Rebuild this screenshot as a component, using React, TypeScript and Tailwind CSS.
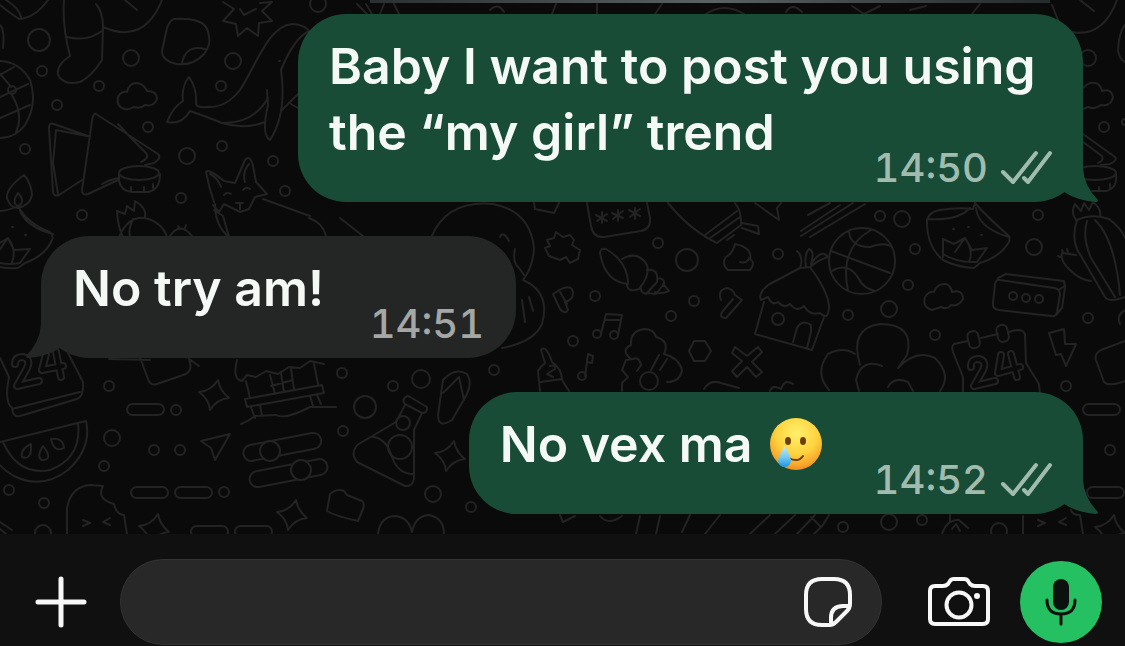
import { type ReactNode } from "react";

type BubbleProps = {
  mine?: boolean;
  time: string;
  children: ReactNode;
};

const dots = [
  [39, 40, 11], [131, 58, 8], [233, 61, 8], [42, 71, 5], [99, 86, 5], [57, 105, 5], [221, 86, 5], [148, 127, 5],
  [25, 149, 5], [187, 156, 8], [222, 146, 5], [273, 161, 5], [285, 191, 5], [181, 198, 5], [82, 215, 5],
  [109, 386, 5], [176, 410, 5], [112, 438, 8], [154, 450, 5], [180, 450, 5], [104, 466, 5], [9, 490, 5],
  [44, 503, 5], [224, 492, 5], [43, 533, 8], [342, 373, 5], [421, 379, 9], [393, 386, 5], [365, 407, 11],
  [343, 431, 5], [433, 494, 8], [471, 507, 5], [494, 370, 5], [658, 243, 5], [687, 260, 11], [778, 254, 5],
  [595, 296, 5], [694, 301, 5], [671, 316, 5], [573, 341, 5], [880, 216, 5], [902, 219, 8], [915, 249, 5],
  [908, 285, 5], [889, 309, 8], [848, 315, 5], [935, 335, 5], [1038, 215, 5], [1034, 247, 8], [1088, 318, 5],
  [1066, 386, 5], [1110, 450, 5], [843, 527, 5], [889, 522, 8], [922, 520, 5], [999, 531, 8], [318, 4, 8],
  [1088, 58, 8], [1104, 127, 5], [1125, 122, 3],
];

const pills = [
  [127, 404], [131, 487], [175, 487], [191, 526], [235, 526], [1083, 404], [1087, 487],
];

const sparkles = [
  [214, 395], [450, 456], [292, 515], [154, 529], [1110, 530],
];

function Wallpaper() {
  return (
    <svg
      aria-hidden="true"
      viewBox="0 0 1125 534"
      preserveAspectRatio="xMinYMin slice"
      className="absolute inset-0 h-full w-full"
      fill="none"
      stroke="#242323"
      strokeWidth="2"
      strokeLinecap="round"
      strokeLinejoin="round"
    >
      {dots.map(([x, y, r]) => (
        <circle key={`${x}-${y}`} cx={x} cy={y} r={r} />
      ))}
      {pills.map(([x, y]) => (
        <rect key={`${x}-${y}`} x={x} y={y} width="37" height="11" rx="5.5" />
      ))}
      {sparkles.map(([x, y]) => (
        <path
          key={`${x}-${y}`}
          transform={`translate(${x} ${y})`}
          d="M4-15Q6-4 15 3Q3 4-4 15Q-5 4-15-3Q-3-4 4-15Z"
        />
      ))}

      {/* globe, stocking, sticker, badge */}
      <path d="M0 5Q14 16 19 19Q35 18 48 0M6 0Q19 8 21 17M0 25Q5 30 3 48M0 61Q20 62 30 80Q38 104 25 125Q15 138 0 138M0 75L14 67M0 97L28 84M0 118L30 105M12 95Q24 116 16 132M0 74Q8 83 11 87" />
      <circle cx="12" cy="90" r="4" />
      <path d="M64 0Q62 26 70 56Q56 65 58 75Q64 86 80 82Q92 76 102 60L103 27Q103 12 96 4M67 37Q87 42 102 31M103 27Q144 45 162 0M125 0L137 10" />
      <path d="M174 19Q188 18 197 21Q208 24 209 37Q211 44 204 54Q193 66 177 64Q162 61 162 51L167 28Q170 20 174 19ZM182 63Q186 44 205 49" />
      <path d="M223 2L234 9L223 21L236 24L238 36L247 28L258 36L259 23L272 21L262 11L272 2L260 3M240 9L244 15L256 9" />
      <path d="M125 109Q116 107 118 97Q121 91 127 92Q129 83 137 83Q144 84 147 91Q157 91 157 99Q154 107 145 105Q141 109 134 107Q129 110 125 109Z" />

      {/* whale */}
      <path d="M189 77Q197 88 196 103Q196 108 207 107Q226 108 240 90C256 66 268 26 292 24Q306 24 312 35M189 77Q181 87 183 101Q173 107 167 122Q182 125 190 111Q205 116 222 123Q244 130 265 122M196 105M222 123Q253 124 268 98M309 31Q294 38 281 70Q287 114 270 140Q261 135 268 105L267 90M282 110L312 80M291 104L305 112" />
      <path d="M279 61H280" />

      {/* samosas and bowl */}
      <path d="M88 136L54 124Q49 122 49 128L53 192Q54 197 59 195L82 180M87 136L56 130L53 163L58 194M96 114Q93 113 92 121L82 190Q82 196 88 194L118 180M96 114L158 154Q162 158 154 163L145 165M118 124Q128 135 146 153Q150 158 141 162M102 184Q111 179 119 178" />
      <ellipse cx="139" cy="173" rx="20" ry="7" />
      <path d="M119 174V181Q121 191 132 192H148Q160 190 160 174M131 187V191M144 187V191M153 184V188" />

      {/* fox */}
      <path d="M214 202Q209 188 206 172Q208 168 224 181L235 183L245 160Q250 154 253 166L256 182L267 194L255 197L249 209L240 212L224 204L219 212L213 205M214 210L223 216L229 237M263 199L310 216M210 174Q218 178 221 187M249 164Q242 172 245 182M224 195Q227 191 231 194M243 190Q246 186 250 189M236 203H243M240 204V209" />

      {/* oil lamps */}
      <path d="M24 175Q6 188 7 198Q10 208 18 208Q31 205 32 194Q31 183 24 175ZM18 193Q11 203 18 206Q26 202 18 193M0 211Q11 210 18 206Q28 224 50 232Q54 236 52 240Q45 256 25 263L18 268Q8 269 0 267M20 211Q28 228 53 234M0 243L8 238L14 250L30 249L20 263Q10 265 0 263M-2 252L8 238Q17 251 12 262" />
      <path d="M12 227H13M25 235H26" />
      <path d="M927 221Q928 212 940 210Q958 207 973 209L975 203Q986 216 1009 236Q1010 239 1009 242Q1000 257 980 263L974 268Q956 267 943 260Q926 246 927 219ZM928 219Q958 221 970 208M976 208Q978 228 1009 237M943 257V239L954 244L965 238L972 250L987 248L977 262Q957 263 943 254M955 252L965 238Q974 251 969 262" />
      <path d="M953 229H954M968 227H969M981 235H982" />

      {/* cactus */}
      <path d="M123 237Q118 228 117 211L125 214L127 206L134 211L135 201Q147 208 145 217M119 237Q128 216 145 218Q162 222 167 237M133 219Q128 229 130 237M170 236Q180 221 192 236M180 229L178 226M185 228L186 225" />
      <path d="M1077 221Q1070 213 1075 204L1081 211L1084 203L1089 210L1093 202Q1102 209 1100 217M1077 220Q1092 213 1109 219Q1121 228 1125 238M1077 220Q1070 241 1081 256L1105 297Q1109 303 1125 297M1087 221Q1082 237 1091 258L1115 297M1095 220Q1115 239 1120 295M1076 255L1062 253Q1060 261 1070 270Q1080 280 1091 281M1060 257L1058 256M1063 253L1062 250M1068 252L1067 249" />

      {/* calendars */}
      <path d="M968 341L954 344Q951 346 953 352L963 377V392M981 338L998 334M1009 332Q1022 327 1025 334L1026 363L1039 384L1040 394" />
      <rect x="968" y="331" width="11" height="17" rx="5" transform="rotate(-13 974 339)" />
      <rect x="997" y="325" width="11" height="17" rx="5" transform="rotate(-13 1002 333)" />
      <path d="M971 367Q970 359 979 359Q987 361 983 370L974 386L995 381M1001 355L998 373L1020 367M1011 354L1017 377" strokeWidth="8" />
      <path d="M971 367Q970 359 979 359Q987 361 983 370L974 386L995 381M1001 355L998 373L1020 367M1011 354L1017 377" stroke="#0a0a0a" strokeWidth="4" />
      <path d="M0 358L9 377Q4 402 12 408Q13 418 20 416L77 399Q84 397 83 382L68 353M12 409L80 392" />
      <path d="M15 364Q15 357 23 357Q31 359 27 368L17 386L39 381M46 354L42 370L63 366M56 352L61 377" strokeWidth="8" />
      <path d="M15 364Q15 357 23 357Q31 359 27 368L17 386L39 381M46 354L42 370L63 366M56 352L61 377" stroke="#0a0a0a" strokeWidth="4" />

      {/* watermelon and ice cream */}
      <path d="M0 442L86 421Q92 448 68 470Q42 490 14 476Q4 470 0 465M3 442Q18 476 50 470Q82 458 78 423M31 444Q20 449 22 457Q32 461 31 444ZM43 446Q36 457 42 460Q54 460 43 446ZM51 439Q63 437 64 448Q54 453 51 439Z" />
      <path d="M67 534V508Q71 486 91 485L103 486Q96 499 114 504Q116 514 124 515L127 534M83 520L90 523L83 526M110 518L103 522L110 525M0 522L12 530M0 529L6 534" />
      <path d="M1023 516V534M1038 520L1045 523L1038 526M1066 518L1059 522L1066 525M1071 510Q1072 515 1080 515L1083 534" />

      {/* market stall and hut */}
      <path d="M237 360Q232 379 242 381L247 375L256 377L266 371L278 374L289 367L300 368L310 361L324 364M246 381L250 398M270 375L275 394M291 369L294 389M314 364L318 384M271 386L293 380M281 373L284 392M245 399L322 385L324 393L247 407ZM251 407L255 418M260 405L262 416M310 396L313 406M317 395L321 404M241 424Q249 421 255 416L276 415Q285 420 310 407H336M109 359L150 360M138 352L148 379Q150 386 157 384L186 374Q193 370 189 359L199 366" />
      <path d="M800 268L768 285Q758 293 761 300L768 297Q772 306 778 302Q784 309 790 304Q797 313 804 306Q810 316 820 313Q829 322 829 305Q827 290 810 267M797 251Q804 257 800 268L810 267Q820 259 828 257Q822 248 811 264Q815 251 809 249Q804 254 806 267M764 302L755 334L812 350L824 317M793 342L797 328Q802 319 811 325L811 332L807 348" />
      <circle cx="778" cy="319" r="6" />

      {/* paper plane, sliders, flask, slipper */}
      <path d="M201 441L230 434L215 460L211 448ZM378 534Q380 516 396 516Q409 518 412 532Q415 516 429 515Q444 518 444 534M327 511L330 494Q337 488 344 491L347 495L362 501Q365 503 363 509L358 521Q335 516 327 511Z" />
      <rect x="243" y="439" width="79" height="16" rx="8" transform="rotate(-11 282 448)" />
      <rect x="249" y="465" width="79" height="16" rx="8" transform="rotate(-11 289 473)" />
      <circle cx="270" cy="451" r="10" fill="#0a0a0a" />
      <circle cx="301" cy="470" r="10" fill="#0a0a0a" />
      <path d="M407 396Q401 400 405 404L422 413Q428 413 427 407L410 397Q408 396 407 396ZM405 405L396 422L357 445Q350 454 357 462L405 486Q412 487 414 479V430L422 413M373 437Q386 438 392 457Q398 474 413 474" />
      <circle cx="403" cy="423" r="7" />
      <circle cx="400" cy="447" r="12" />
      <path d="M443 380Q455 367 467 374Q474 384 463 401L452 420Q438 429 438 415ZM443 393L459 377L464 400" />

      {/* smiley and mitten peeking out behind the reply */}
      <path d="M431 238Q446 200 493 204Q530 211 534 248Q533 267 523 280M500 237Q503 230 509 241M515 249Q512 262 519 268L524 275M523 280Q551 292 542 324Q534 342 502 348M522 300L525 322M529 297L533 311M215 204Q215 226 229 237M340 218L363 236M309 218Q323 223 326 236" />

      {/* password, gear, shell, boat */}
      <path d="M587 203L591 226Q593 238 604 237L641 231Q651 229 650 218L647 203M602 212V223M596 215L607 221M607 214L597 221M618 210V221M612 213L623 218M623 211L613 219M635 208V219M629 210L640 216M640 209L630 217M534 203L535 209L554 213L559 203" />
      <path d="M556 232L563 237L570 235L574 240L572 245L580 250L578 259L570 263L566 257L560 260L549 256L545 248L550 246L547 240L554 238Z" />
      <path d="M606 249Q628 262 628 284Q605 282 600 253Q600 248 606 249ZM622 259Q638 250 647 265Q650 276 639 289Q628 293 627 285M647 270Q659 268 657 282L646 294Q640 292 641 288M657 278Q665 278 664 284L656 294L647 293M663 284L669 291Q660 295 655 292" />
      <path d="M668 203Q690 230 717 243L741 225Q742 212 735 203M705 235L737 211M710 238L740 217M742 223L758 226L759 234L742 228M755 203L779 220L777 208L781 203M808 215L830 203M801 231L840 205M801 236L853 203M810 237L865 204M727 240L734 235" />
      <path d="M735 244Q733 253 726 257Q721 264 728 270H750Q756 263 750 259Q753 248 735 244ZM740 262Q747 264 749 258" />

      {/* keys, notes, flowers */}
      <path d="M553 294Q572 281 573 293Q573 300 565 302L568 310Q565 315 560 309ZM560 292L567 304M721 300Q717 290 727 288Q733 289 735 295L742 300L726 318Q719 318 722 312L733 299M601 334L606 314L622 315L618 335M606 320H621M585 376L588 354L593 356L592 363L587 362" />
      <circle cx="597" cy="334" r="4" />
      <circle cx="614" cy="335" r="4" />
      <circle cx="582" cy="376" r="4" />
      <path d="M631 359Q620 350 631 345Q630 331 644 329Q654 329 656 337Q670 341 664 354Q679 358 682 370Q680 382 667 382M659 355L651 370M667 359L660 370M637 371L641 365Q639 356 633 359L626 360L622 370L628 377L622 383V391" />
      <circle cx="649" cy="381" r="9" />
      <path d="M689 351L694 341H705L711 351L705 361H694ZM735 347L747 356L758 347L762 352L752 362L762 372L756 377L747 367L737 377L732 371L742 361L732 353Z" />
      <path d="M540 391L538 371Q541 366 545 363L541 350Q546 344 552 362Q562 369 562 380L569 391M541 382L562 379M550 366Q555 364 555 369L547 374L553 377M704 389Q710 379 721 383L739 388M770 391Q772 384 781 389Q785 378 793 384" />

      {/* basketball, cloud, brick, bolt, tree */}
      <circle cx="862" cy="261" r="33" />
      <path d="M831 251L890 273M849 231Q850 247 870 247Q882 242 891 246M871 230Q839 248 848 291M832 271Q848 261 859 279Q863 288 875 291" />
      <path d="M932 310Q922 307 925 297Q929 291 934 292Q937 283 946 284Q951 286 952 292Q963 289 963 299Q958 307 951 305Q947 310 941 307Z" />
      <path d="M1000 280L1054 288Q1060 289 1060 294L1057 312Q1056 317 1051 316L999 310Q992 309 993 303L995 284Q996 279 1000 280ZM998 278L1006 274L1064 281L1065 287L1062 308L1056 315M1060 289L1065 286" />
      <circle cx="1013" cy="296" r="4" />
      <circle cx="1026" cy="298" r="4" />
      <circle cx="1039" cy="299" r="4" />
      <path d="M1049 333L1064 329L1065 344L1076 344L1066 366L1061 354L1056 355ZM1125 341L1101 350Q1094 354 1096 360L1104 382Q1109 387 1125 381M1125 310Q1116 315 1120 324" />
      <path d="M860 365Q849 328 880 324Q915 324 907 355L898 368Q916 349 935 358Q952 375 940 391M855 354Q843 346 828 354Q814 373 829 390M882 366Q861 358 856 380L859 391M888 387Q894 376 908 382L913 391" />

      {/* right edge */}
      <path d="M1052 5L1058 20M1072 32Q1103 38 1117 0M1080 0L1094 11M1125 25Q1119 32 1118 50Q1119 59 1125 62M1083 88Q1090 80 1098 84Q1102 88 1102 91Q1112 88 1113 98Q1110 107 1101 105Q1095 110 1088 107L1083 109M1083 134L1115 157Q1118 160 1110 164L1101 165M1083 142L1102 156Q1104 161 1098 163" />
      <ellipse cx="1095" cy="173" rx="21" ry="7" />
      <path d="M1092 191H1106Q1118 188 1116 174M1099 187V191M1110 184V188" />

      {/* bottom row */}
      <path d="M770 515L750 534M795 515L775 534M815 515L797 534M829 515L823 525L814 534M811 517L820 526M942 534Q947 519 959 520L968 528M950 522V515M952 529L956 524L960 531M560 515L563 522L575 516M600 516Q608 526 622 516M690 515L682 532M720 515L705 534M640 516L636 534M660 516L656 534" />

      {/* top row */}
      <path d="M357 4L367 14M366 4L372 14M384 4L380 14M394 4L399 14M490 10Q498 2 504 12M556 4L552 14M597 4V14M655 14L662 4M706 14Q724 2 744 14M786 12Q792 2 802 12M852 6L864 14L880 6M910 10L926 6M972 14L980 4" />
    </svg>
  );
}

function Ticks() {
  return (
    <svg role="img" aria-label="Delivered" viewBox="0 0 52 36" className="h-9 w-[52px]" fill="none" stroke="currentColor" strokeWidth="4" strokeLinecap="round" strokeLinejoin="round">
      <path d="M3 22L13 32L36 3M24 28L28 32L50 3" />
    </svg>
  );
}

function Tail({ mine }: { mine?: boolean }) {
  return (
    <svg
      aria-hidden="true"
      viewBox="0 0 58 60"
      className={
        mine
          ? "absolute -right-[15px] bottom-0 h-[60px] w-[58px] text-[#184c36]"
          : "absolute bottom-0 -left-[15px] h-[60px] w-[58px] -scale-x-100 text-[#232625]"
      }
      fill="currentColor"
    >
      <path d="M43 0V26Q44 44 58 58Q58 60 55 60Q36 58 24 50Q18 54 8 57L0 30Z" />
    </svg>
  );
}

function SmileWithTear() {
  return (
    <svg role="img" aria-label="Smiling face with tear" viewBox="0 0 54 54" className="ml-1 inline-block h-[54px] w-[54px] align-[-9px]">
      <defs>
        <radialGradient id="face" cx="0.52" cy="0.3" r="0.72">
          <stop offset="0" stopColor="#fff06c" />
          <stop offset="0.55" stopColor="#fdd33f" />
          <stop offset="0.85" stopColor="#f8a52b" />
          <stop offset="1" stopColor="#ee8521" />
        </radialGradient>
        <linearGradient id="tear" x1="0" y1="0" x2="0" y2="1">
          <stop offset="0" stopColor="#c5ecfa" />
          <stop offset="0.55" stopColor="#6fc9f3" />
          <stop offset="1" stopColor="#1d94e3" />
        </linearGradient>
      </defs>
      <circle cx="27" cy="27" r="26" fill="url(#face)" />
      <ellipse cx="19" cy="24" rx="3" ry="4" fill="#6d3f0c" />
      <ellipse cx="34" cy="24" rx="3" ry="4" fill="#6d3f0c" />
      <path d="M20 41Q29 46 34 39" fill="none" stroke="#6d3f0c" strokeWidth="2" strokeLinecap="round" />
      <path d="M16 29Q9 40 9 44Q10 50 16 50Q22 49 22 43Q21 38 16 29Z" fill="url(#tear)" />
    </svg>
  );
}

function Bubble({ mine, time, children }: BubbleProps) {
  return (
    <li
      className={
        mine
          ? "relative flex max-w-[785px] flex-col self-end rounded-[48px] bg-[#184c36] px-[31px] pt-[19px] pb-[14px]"
          : "relative flex max-w-[785px] flex-col self-start rounded-[48px] bg-[#232625] px-8 pt-[19px] pb-[14px]"
      }
    >
      <Tail mine={mine} />
      <p className="relative text-[50px] leading-[66px] font-semibold text-[#f5f9f6]">
        {children}
        {/* keeps the last line clear of the time */}
        <span className={mine ? "inline-block w-[229px]" : "inline-block w-40"} />
      </p>
      <div
        className={
          mine
            ? "relative -mt-[17px] flex items-center gap-3 self-end text-[40px] leading-[40px] font-medium text-[#a0bcaf] tabular-nums"
            : "relative -mt-[17px] flex items-center self-end text-[40px] leading-[40px] font-medium text-[#a5a6a6] tabular-nums"
        }
      >
        <time>{time}</time>
        {mine && <Ticks />}
      </div>
    </li>
  );
}

function Composer() {
  return (
    <form className="flex h-28 items-center bg-[#101010] pt-6 pr-[23px] pl-[34px] text-[#f7f7f7]" onSubmit={(e) => e.preventDefault()}>
      <button type="button" aria-label="Attach" className="shrink-0">
        <svg viewBox="0 0 54 54" className="h-[54px] w-[54px]" fill="none" stroke="currentColor" strokeWidth="5" strokeLinecap="round">
          <path d="M27 4V50M4 27H50" />
        </svg>
      </button>
      <div className="ml-8 flex h-[86px] min-w-0 flex-1 items-center rounded-full border border-[#333333] bg-[#282828] pr-7 pl-8">
        <input aria-label="Message" className="h-full min-w-0 flex-1 bg-transparent text-[40px] outline-none" />
        <button type="button" aria-label="Stickers" className="shrink-0">
          <svg viewBox="0 0 50 50" className="h-[50px] w-[50px]" fill="none" stroke="currentColor" strokeWidth="4" strokeLinejoin="round">
            <path d="M27 48H19Q3 48 3 32V18Q3 2 19 2H31Q47 2 47 18V27Q47 31 44 34L34 44Q30 48 27 48ZM28 48V41Q28 29 40 29H47" />
          </svg>
        </button>
      </div>
      <button type="button" aria-label="Camera" className="ml-[46px] shrink-0">
        <svg viewBox="0 0 62 50" className="h-[50px] w-[62px]" fill="none" stroke="currentColor" strokeWidth="4" strokeLinejoin="round">
          <path d="M7 9H15Q18 9 20 7L22 4Q23 2 26 2H36Q39 2 40 4L42 7Q44 9 47 9H55Q60 9 60 14V42Q60 47 55 47H7Q2 47 2 42V14Q2 9 7 9Z" />
          <circle cx="31" cy="28" r="12.5" />
          <circle cx="49" cy="19" r="3" fill="currentColor" stroke="none" />
        </svg>
      </button>
      <button type="button" aria-label="Record voice message" className="ml-[30px] flex size-[82px] shrink-0 items-center justify-center rounded-full bg-[#25c062] text-[#0b110d]">
        <svg viewBox="0 0 32 48" className="h-12 w-8" fill="none" stroke="currentColor" strokeWidth="3" strokeLinecap="round">
          <rect x="8" y="1" width="16" height="31" rx="8" fill="currentColor" stroke="none" />
          <path d="M2 22Q2 36 16 36Q30 36 30 22M16 36V46" />
        </svg>
      </button>
    </form>
  );
}

export default function App() {
  return (
    <div className="flex min-h-screen flex-col overflow-hidden bg-[#0a0a0a] font-['Inter','Liberation_Sans',sans-serif]">
      <main className="relative flex-1">
        <Wallpaper />
        {/* lower edge of the photo sent before */}
        <div className="relative mr-[75px] ml-auto h-[3px] w-[680px] max-w-full bg-linear-to-r from-[#29302f] via-[#5b6262] to-[#252b2a]" />
        <ol className="relative flex flex-col gap-[34px] pt-[11px] pr-[42px] pb-5 pl-[41px]">
          <Bubble mine time="14:50">
            Baby I want to post you using the “my girl” trend
          </Bubble>
          <Bubble time="14:51">No try am!</Bubble>
          <Bubble mine time="14:52">
            No vex ma <SmileWithTear />
          </Bubble>
        </ol>
      </main>
      <Composer />
    </div>
  );
}
